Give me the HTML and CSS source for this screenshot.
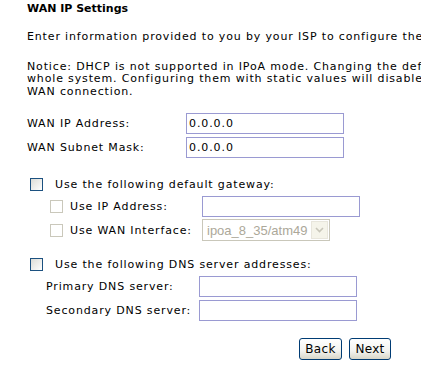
FILE: index.html
```html
<!DOCTYPE html>
<html lang="en">
<head>
  <meta charset="UTF-8" />
  <title>WAN IP Settings</title>
  <link rel="stylesheet" href="styles.css">
</head>
<body>
  <div class="page">
    <div class="title">WAN IP Settings</div>

    <p class="intro">Enter information provided to you by your ISP to configure the WAN IP settings.</p>

    <p class="notice">Notice: DHCP is not supported in IPoA mode. Changing the default gateway or the DNS effects the<br>
      whole system. Configuring them with static values will disable the automatic assignment from DHCP or other<br>
      WAN connection.</p>

    <div class="rows wan">
      <div class="row">
        <span class="label">WAN IP Address:</span>
        <input type="text" class="field" value="0.0.0.0">
      </div>
      <div class="row">
        <span class="label">WAN Subnet Mask:</span>
        <input type="text" class="field" value="0.0.0.0">
      </div>
    </div>

    <div class="check-row">
      <span class="box"></span>
      <span>Use the following default gateway:</span>
    </div>
    <div class="rows gateway">
      <div class="row">
        <span class="box off"></span>
        <span class="label">Use IP Address:</span>
        <input type="text" class="field">
      </div>
      <div class="row">
        <span class="box off"></span>
        <span class="label">Use WAN Interface:</span>
        <div class="select">
          <span class="select-text">ipoa_8_35/atm49</span>
          <span class="select-btn">
            <svg width="9" height="6" viewBox="0 0 9 6"><path d="M1 1 L4.5 4.5 L8 1" fill="none" stroke="#c9c7ba" stroke-width="1.6"/></svg>
          </span>
        </div>
      </div>
    </div>

    <div class="check-row dns-check">
      <span class="box"></span>
      <span>Use the following DNS server addresses:</span>
    </div>
    <div class="rows dns">
      <div class="row">
        <span class="label">Primary DNS server:</span>
        <input type="text" class="field">
      </div>
      <div class="row">
        <span class="label">Secondary DNS server:</span>
        <input type="text" class="field">
      </div>
    </div>

    <div class="buttons">
      <button class="back">Back</button>
      <button class="next">Next</button>
    </div>
  </div>
</body>
</html>
```

FILE: styles.css
```css
html, body {
  overflow: hidden;
}

body {
  margin: 0;
  padding: 0;
  background-color: #fff;
  font-family: "DejaVu Sans", Verdana, sans-serif;
  font-size: 11px;
  letter-spacing: 0.85px;
  color: #000;
}

.page {
  padding: 0 0 0 27px;
  white-space: nowrap;
}

.title {
  font-weight: bold;
  letter-spacing: 0;
  line-height: 13px;
  padding-top: 2px;
}

p {
  margin: 0;
  line-height: 12.5px;
}

.intro {
  margin-top: 16px;
}

.notice {
  margin-top: 17px;
}

.rows {
  display: flex;
  flex-direction: column;
  gap: 2px;
}

.row {
  display: flex;
  align-items: center;
  height: 22px;
}

.wan {
  margin-top: 14px;
}

.wan .label {
  width: 159px;
}

.field {
  box-sizing: border-box;
  width: 158px;
  height: 21px;
  margin: 0;
  padding: 0 2px;
  border: 1px solid #9a9ad2;
  font-family: "DejaVu Sans", Verdana, sans-serif;
  font-size: 11px;
  letter-spacing: 0.9px;
  color: #000;
  background: #fff;
}

.check-row {
  display: flex;
  align-items: center;
  height: 22px;
  margin-top: 15px;
  padding-left: 3px;
  gap: 12px;
}

.box {
  display: inline-block;
  box-sizing: border-box;
  width: 13px;
  height: 13px;
  border: 1px solid #1c5180;
  background: linear-gradient(135deg, #dcdcd7 0%, #f4f4f2 70%, #fff 100%);
  flex-shrink: 0;
}

.box.off {
  border-color: #cac8bb;
  background: #fff;
}

.gateway .row {
  padding-left: 23px;
}

.gateway .box {
  margin-right: 7px;
}

.gateway .label {
  width: 132px;
}

.select {
  box-sizing: border-box;
  display: flex;
  align-items: center;
  width: 128px;
  height: 22px;
  border: 1px solid #c9c7ba;
  background: #fff;
  padding: 1px;
}

.select-text {
  flex: 1;
  padding-left: 3px;
  font-family: "Liberation Sans", Arial, sans-serif;
  font-size: 13px;
  letter-spacing: 0;
  color: #aca899;
}

.select-btn {
  box-sizing: border-box;
  display: flex;
  align-items: center;
  justify-content: center;
  width: 17px;
  height: 18px;
  border: 1px solid #e8e6dc;
  background: #f5f4ea;
}

.dns-check {
  margin-top: 12px;
}

.dns .row {
  padding-left: 19px;
}

.dns .label {
  width: 153px;
}

.buttons {
  display: flex;
  justify-content: flex-end;
  gap: 7px;
  width: 364px;
  margin-top: 17px;
}

button {
  box-sizing: border-box;
  height: 22px;
  padding: 0;
  border: 1px solid #003c74;
  border-radius: 3px;
  background: linear-gradient(#ffffff 0%, #f3f3ef 60%, #d8d6c8 100%);
  font-family: "DejaVu Sans", Verdana, sans-serif;
  font-size: 12px;
  letter-spacing: 0.3px;
  color: #000;
  cursor: pointer;
}

.back {
  width: 43px;
}

.next {
  width: 42px;
}
```
